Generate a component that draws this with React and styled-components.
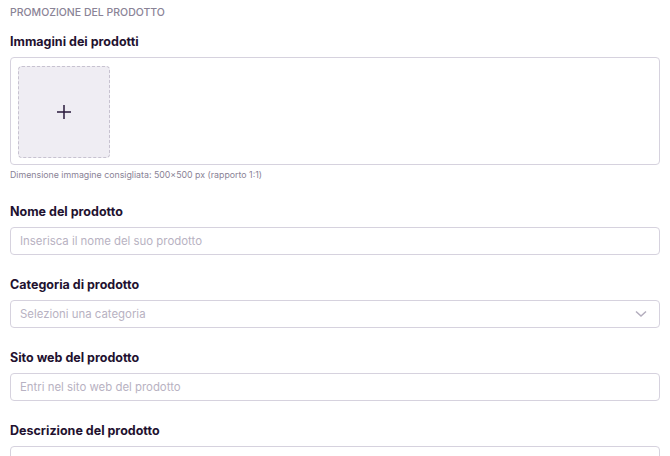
import React from 'react';
import styled, { createGlobalStyle } from 'styled-components';

const GlobalStyle = createGlobalStyle`
  body {
    margin: 0;
    background: #fff;
    font-family: Inter, "Noto Sans", sans-serif;
    color: #24142f;
  }
`;

const fields = [
  { label: 'Nome del prodotto', placeholder: 'Inserisca il nome del suo prodotto' },
  { label: 'Categoria di prodotto', placeholder: 'Selezioni una categoria', select: true },
  { label: 'Sito web del prodotto', placeholder: 'Entri nel sito web del prodotto' },
];

const App = () => {
  return (
    <Page>
      <GlobalStyle />
      <SectionTitle>PROMOZIONE DEL PRODOTTO</SectionTitle>

      <Field>
        <Label>Immagini dei prodotti</Label>
        <ImageBox>
          <UploadTile>
            <svg width="16" height="16" viewBox="0 0 16 16">
              <path d="M8 1v14M1 8h14" stroke="#2a1a3c" strokeWidth="1.5" fill="none" />
            </svg>
          </UploadTile>
        </ImageBox>
        <Hint>Dimensione immagine consigliata: 500×500 px (rapporto 1:1)</Hint>
      </Field>

      {fields.map((f) => (
        <Field key={f.label}>
          <Label>{f.label}</Label>
          <InputBox>
            <Placeholder>{f.placeholder}</Placeholder>
            {f.select && (
              <svg width="12" height="8" viewBox="0 0 12 8">
                <path d="M1 1.5l5 4.5 5-4.5" stroke="#b3adbd" strokeWidth="1.5" fill="none" />
              </svg>
            )}
          </InputBox>
        </Field>
      ))}

      <Field>
        <Label>Descrizione del prodotto</Label>
        <TextArea />
      </Field>
    </Page>
  );
};

export default App;

// contenitore della pagina
const Page = styled.div`
  display: flex;
  flex-direction: column;
  padding: 6px 10px 0 10px;
  height: 456px;
  overflow: hidden;
  box-sizing: border-box;
`;

const SectionTitle = styled.div`
  font-size: 10.5px;
  font-weight: 500;
  color: #8a8396;
  line-height: 13px;
  margin-bottom: 15px;
`;

const Field = styled.div`
  display: flex;
  flex-direction: column;
  margin-bottom: 22px;
`;

const Label = styled.div`
  font-size: 12.5px;
  font-weight: 700;
  color: #22112f;
  line-height: 16px;
  margin-bottom: 7px;
`;

const ImageBox = styled.div`
  border: 1px solid #d6d2de;
  border-radius: 4px;
  height: 108px;
  padding: 8px 7px;
  box-sizing: border-box;
`;

const UploadTile = styled.div`
  width: 92px;
  height: 92px;
  box-sizing: border-box;
  border: 1px dashed #c7c2d0;
  border-radius: 4px;
  background: #efedf3;
  display: flex;
  align-items: center;
  justify-content: center;
`;

const Hint = styled.div`
  font-size: 8.8px;
  color: #8a8396;
  margin-top: 4px;
  line-height: 11px;
  margin-bottom: 2px;
`;

const InputBox = styled.div`
  height: 28px;
  box-sizing: border-box;
  border: 1px solid #d6d2de;
  border-radius: 4px;
  display: flex;
  align-items: center;
  justify-content: space-between;
  padding: 0 12px 0 9px;
`;

const Placeholder = styled.span`
  font-size: 11.4px;
  color: #b8b2c2;
`;

const TextArea = styled.div`
  height: 60px;
  border: 1px solid #d6d2de;
  border-radius: 4px;
`;
